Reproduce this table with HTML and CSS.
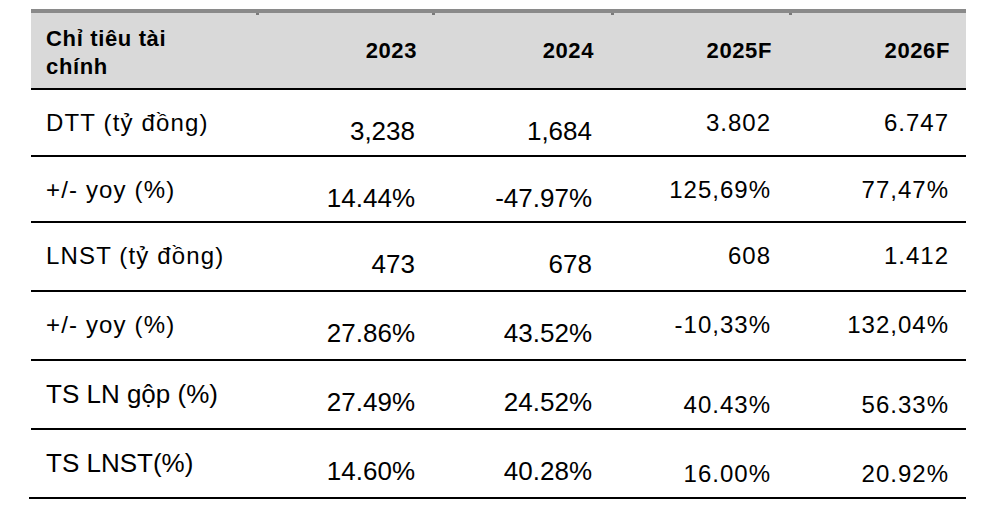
FILE: index.html
```html
<!DOCTYPE html>
<html lang="vi">
<head>
<meta charset="utf-8">
<title>Chỉ tiêu tài chính</title>
<link rel="stylesheet" href="styles.css">
</head>
<body>
<div class="fin">
  <div class="row head">
    <div class="cell hlabel">Chỉ tiêu tài<br>chính</div>
    <div class="cell year">2023</div>
    <div class="cell year">2024</div>
    <div class="cell year">2025F</div>
    <div class="cell year">2026F</div>
  </div>
  <div class="row r65">
    <div class="cell lbl">DTT (tỷ đồng)</div>
    <div class="cell num lo">3,238</div>
    <div class="cell num lo">1,684</div>
    <div class="cell num hi">3.802</div>
    <div class="cell num hi">6.747</div>
  </div>
  <div class="row r64">
    <div class="cell lbl">+/- yoy (%)</div>
    <div class="cell num lo">14.44%</div>
    <div class="cell num lo">-47.97%</div>
    <div class="cell num hi">125,69%</div>
    <div class="cell num hi">77,47%</div>
  </div>
  <div class="row">
    <div class="cell lbl">LNST (tỷ đồng)</div>
    <div class="cell num lo">473</div>
    <div class="cell num lo">678</div>
    <div class="cell num hi">608</div>
    <div class="cell num hi">1.412</div>
  </div>
  <div class="row">
    <div class="cell lbl">+/- yoy (%)</div>
    <div class="cell num lo">27.86%</div>
    <div class="cell num lo">43.52%</div>
    <div class="cell num hi">-10,33%</div>
    <div class="cell num hi">132,04%</div>
  </div>
  <div class="row">
    <div class="cell lbl big">TS LN gộp (%)</div>
    <div class="cell num lo">27.49%</div>
    <div class="cell num lo">24.52%</div>
    <div class="cell num hi low">40.43%</div>
    <div class="cell num hi low">56.33%</div>
  </div>
  <div class="row last">
    <div class="cell lbl big">TS LNST(%)</div>
    <div class="cell num lo">14.60%</div>
    <div class="cell num lo">40.28%</div>
    <div class="cell num hi low">16.00%</div>
    <div class="cell num hi low">20.92%</div>
  </div>
</div>
</body>
</html>
```
FILE: styles.css
```css
* { box-sizing: border-box; }

body {
  margin: 0;
  background: #ffffff;
  color: #000000;
  font-family: "Liberation Sans", Arial, sans-serif;
}

.fin {
  margin: 9px 0 0 31px;
  width: 935px;
  border-top: 4px solid #8a8a8a;
}

.row {
  display: grid;
  grid-template-columns: 226px 176px 179px 178px 176px;
  height: 69px;
  border-bottom: 2px solid #000000;
}

.row.r65 { height: 67px; }
.row.r64 { height: 66px; }

.row.last {
  margin-left: -2px;
  grid-template-columns: 228px 176px 179px 178px 176px;
}

.head {
  height: 77px;
  background: #d9d9d9;
}

.cell {
  white-space: nowrap;
}

.hlabel {
  padding: 12px 0 0 15px;
  font-size: 22px;
  font-weight: bold;
  line-height: 28px;
  letter-spacing: 0.65px;
}

.year {
  position: relative;
  padding-top: 24px;
  text-align: right;
  font-size: 22px;
  font-weight: bold;
  line-height: 28px;
  letter-spacing: 0.6px;
}

.year::before {
  content: "";
  position: absolute;
  left: -1px;
  top: 0;
  width: 3px;
  height: 2px;
  background: #7a7a7a;
}

.lbl {
  padding: 18px 0 0 15px;
  font-size: 24px;
  line-height: 30px;
  letter-spacing: 1.15px;
}

.row.last .lbl {
  padding-left: 17px;
}

.lbl.big {
  padding-top: 17.5px;
  font-size: 26px;
  letter-spacing: 0;
}

.num {
  text-align: right;
  line-height: 30px;
}

.num.lo {
  padding-top: 26px;
  font-size: 26px;
}

.num.hi {
  padding-top: 18px;
  font-size: 24px;
  letter-spacing: 1px;
}

.num.hi.low {
  padding-top: 28.5px;
}

.row > :nth-child(2) { padding-right: 18px; }
.row > :nth-child(3) { padding-right: 20px; }
.row > :nth-child(4) { padding-right: 19px; }
.row > :nth-child(5) { padding-right: 17px; }

.head > :nth-child(2) { padding-right: 16px; }
.head > :nth-child(3) { padding-right: 18px; }
.head > :nth-child(4) { padding-right: 18px; }
.head > :nth-child(5) { padding-right: 16px; }
```
